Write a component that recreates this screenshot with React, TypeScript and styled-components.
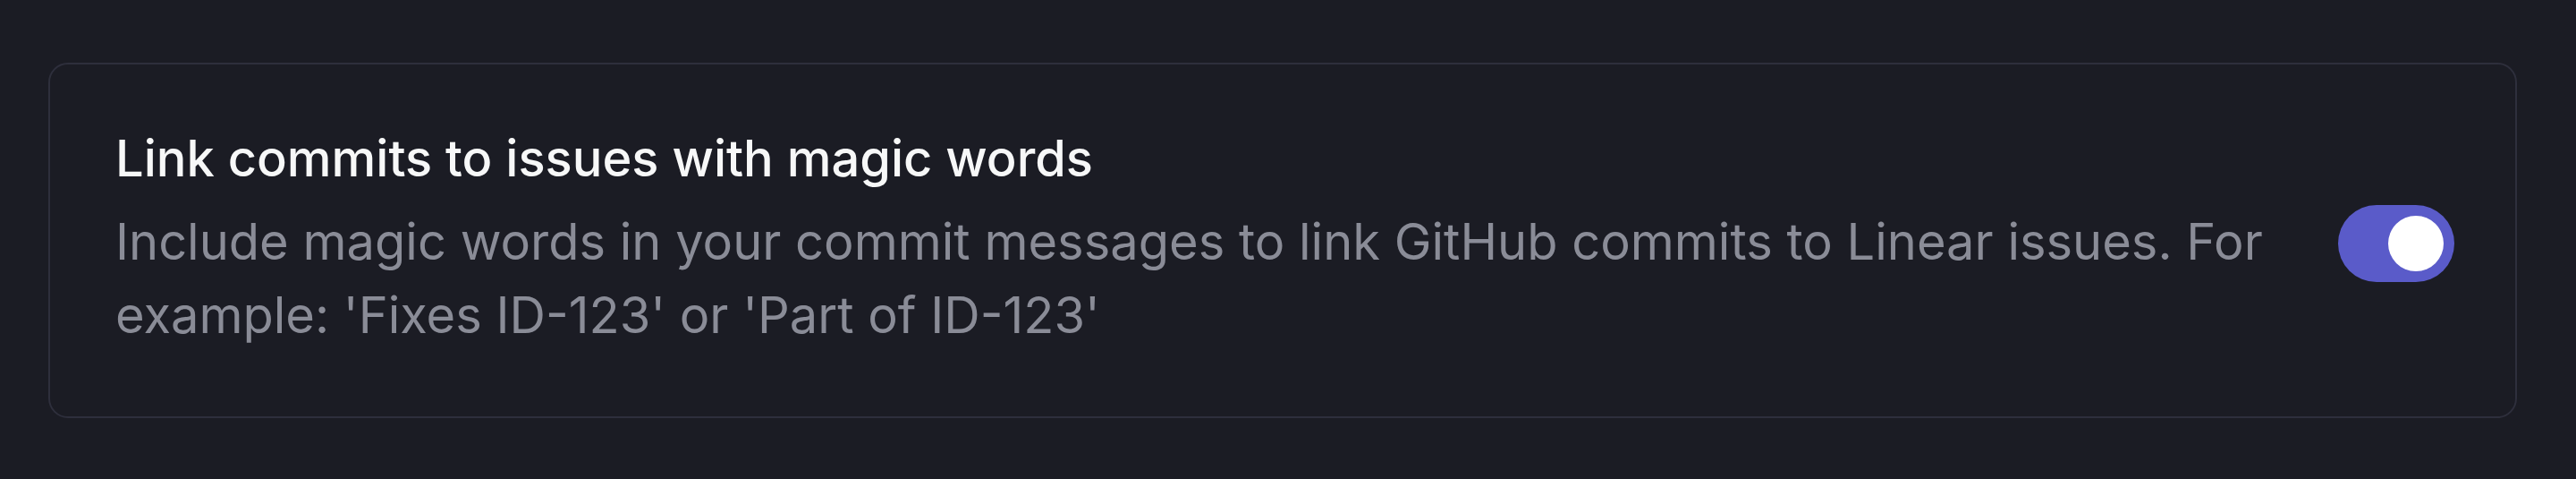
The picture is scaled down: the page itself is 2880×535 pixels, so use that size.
import React, { useState } from 'react';
import styled, { createGlobalStyle } from 'styled-components';

const GlobalStyle = createGlobalStyle`
  html, body {
    margin: 0;
    padding: 0;
    background: #1b1c24;
  }
  body {
    font-family: Inter, "Noto Sans", "Liberation Sans", sans-serif;
    -webkit-font-smoothing: antialiased;
  }
`;

const Page = styled.div`
  box-sizing: border-box;
  width: 2880px;
  height: 535px;
  padding: 70px 66px 0 54px;
  background: #1b1c24;
`;

const Card = styled.section`
  box-sizing: border-box;
  height: 397px;
  display: flex;
  align-items: center;
  gap: 80px;
  padding: 0 68px 0 73px;
  border: 2px solid #2e2f3c;
  border-radius: 22px;
`;

const TextBlock = styled.div`
  flex: 1;
  display: flex;
  flex-direction: column;
  gap: 11px;
  margin-top: -8px;
`;

const Title = styled.h3`
  margin: 0;
  font-size: 56px;
  line-height: 82px;
  font-weight: 500;
  color: #f7f8f8;
`;

const Description = styled.p`
  margin: 0;
  font-size: 56px;
  line-height: 82px;
  font-weight: 400;
  color: #8a8c97;
`;

// on/off switch, knob slides to the end when enabled
const Track = styled.button<{ $on: boolean }>`
  flex: none;
  display: flex;
  align-items: center;
  justify-content: ${(p) => (p.$on ? 'flex-end' : 'flex-start')};
  box-sizing: border-box;
  width: 130px;
  height: 86px;
  margin-top: 6px;
  padding: 0 12px;
  border: none;
  border-radius: 43px;
  background: ${(p) => (p.$on ? '#5a5bc9' : '#3a3b48')};
  cursor: pointer;
`;

const Knob = styled.span`
  width: 62px;
  height: 62px;
  border-radius: 50%;
  background: #ffffff;
`;

export default function App() {
  const [enabled, setEnabled] = useState(true);

  return (
    <>
      <GlobalStyle />
      <Page>
        <Card>
          <TextBlock>
            <Title>Link commits to issues with magic words</Title>
            <Description>
              Include magic words in your commit messages to link GitHub commits to Linear issues. For
              example: 'Fixes ID-123' or 'Part of ID-123'
            </Description>
          </TextBlock>
          <Track $on={enabled} onClick={() => setEnabled(!enabled)} aria-pressed={enabled}>
            <Knob />
          </Track>
        </Card>
      </Page>
    </>
  );
}
